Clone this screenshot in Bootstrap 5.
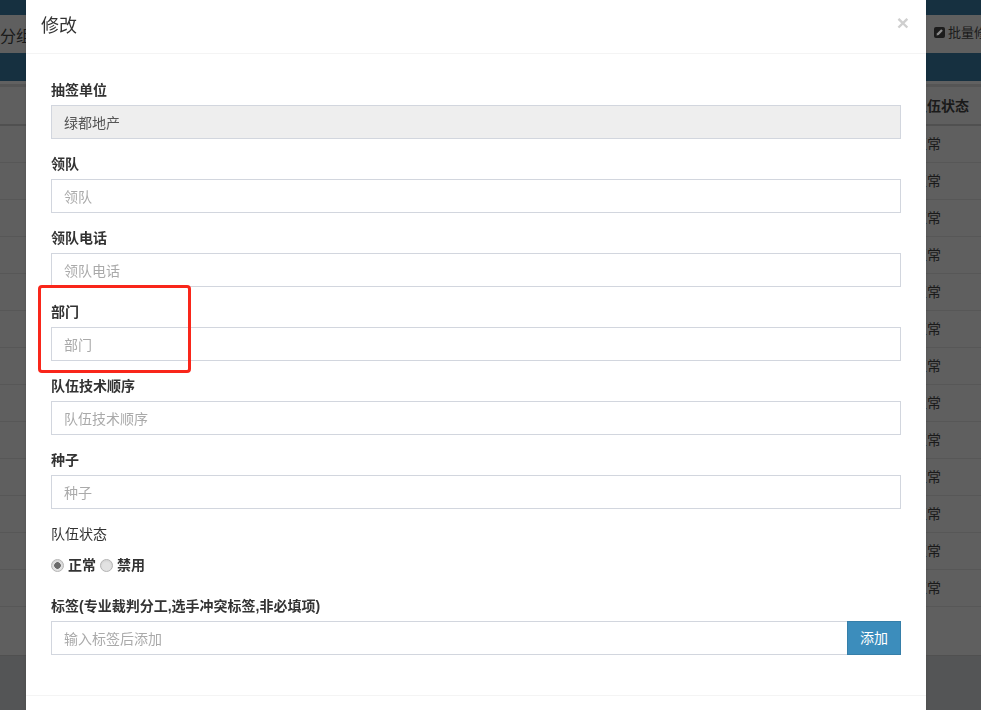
<!DOCTYPE html>
<html lang="zh-CN">
<head>
  <meta charset="UTF-8" />
  <meta name="viewport" content="width=device-width, initial-scale=1.0" />
  <title>修改</title>
  <link href="https://cdn.jsdelivr.net/npm/bootstrap@5.3.0/dist/css/bootstrap.min.css" rel="stylesheet">
  <style>
    html, body { height: 710px; overflow: hidden; }
    body {
      background: #545556;
      color: #1a1a1a;
      font-family: "Liberation Sans", "Noto Sans CJK SC", sans-serif;
      font-size: 14px;
      line-height: 20px;
    }
    .top-strip { height: 15px; background: #163040; }
    .tool-strip { height: 38px; background: #5f5f5f; white-space: nowrap; overflow: hidden; }
    .group-name { font-size: 16px; padding-top: 6px; }
    .batch-btn { font-size: 13px; width: 47px; margin-bottom: 3px; gap: 3px; }
    .edit-mark { width: 11px; height: 11px; flex: none; }
    .title-strip { height: 28px; background: #163040; }
    .gap-strip { height: 6px; background: #616161; border-bottom: 3px solid #555; }
    .team-panel { height: 569px; background: #5f5f5f; border-bottom: 1px solid #505050; }
    .team-table { margin: 0; --bs-table-bg: transparent; --bs-table-color: #1a1a1a; border-color: #575757; font-size: 14px; }
    .team-table th { padding: 9px 8px 8px; border-bottom: 2px solid #505050; white-space: nowrap; }
    .team-table .state-col { width: 76px; white-space: nowrap; }

    .modal .edit-dialog { max-width: 900px; margin: 0 0 0 26px; }
    .edit-dialog .modal-content { border: 0; border-radius: 0; box-shadow: 0 2px 3px rgba(0,0,0,.125); }
    .edit-dialog .modal-header { height: 54px; padding: 0 15px; border-bottom: 1px solid #f4f4f4; border-radius: 0; }
    .edit-dialog .modal-title { font-size: 18px; line-height: 25px; font-weight: 400; color: #333; }
    .close-x { font-size: 21px; font-weight: 700; color: #cfcfcf; line-height: 1; background: none; border: 0; padding: 0 0 8px; margin-right: 2px; font-family: "Liberation Sans", sans-serif; }
    .edit-dialog .modal-body { padding: 26px 25px 25px; color: #333; }
    .edit-dialog .modal-footer { height: 60px; border-top: 1px solid #f4f4f4; padding: 0; border-radius: 0; }
    .field-group { margin-bottom: 15px; position: relative; }
    .field-label { display: block; font-weight: 700; margin-bottom: 5px; color: #333; }
    .field-label.plain { font-weight: 400; }
    .edit-dialog .form-control {
      height: 34px; padding: 7px 12px 5px; border: 1px solid #d2d6de; border-radius: 0;
      font-size: 14px; line-height: 20px; color: #555; box-shadow: none;
    }
    .edit-dialog .form-control::placeholder { color: #aaa; }
    .edit-dialog .form-control:disabled { background: #eee; opacity: 1; padding: 6px 12px; }
    .radio-line { height: 32px; padding-top: 6px; font-weight: 700; gap: 4px; }
    .radio-line .form-check-input {
      width: 13px; height: 13px; margin: 0; flex: none; border: 1px solid #b4b4b4; background: #e2e2e2; box-shadow: inset 0 1px 2px rgba(0,0,0,.08);
    }
    .radio-line .form-check-input:checked {
      background: radial-gradient(circle, #6a6a6a 0 3px, #e2e2e2 3.6px);
      border-color: #b4b4b4;
    }
    .add-btn {
      width: 54px; padding: 6px 0; border-radius: 0; font-size: 14px; line-height: 20px;
      background: #3c8dbc; border: 1px solid #367fa9; color: #fff;
    }
    .red-frame {
      position: absolute; left: -13px; top: -17px; width: 153px; height: 88px;
      border: 3px solid #f9261a; border-radius: 4px; pointer-events: none;
    }
  </style>
</head>
<body>

<div class="top-strip"></div>
<div class="tool-strip d-flex justify-content-between align-items-center">
  <span class="group-name">分组</span>
  <span class="batch-btn d-flex align-items-center overflow-hidden">
    <svg class="edit-mark" viewBox="0 0 11 11"><rect width="11" height="11" rx="2" fill="#1c1c1c"/><path d="M2.5 8.5l.6-2.2L7.2 2.2l1.6 1.6-4.1 4.1z" fill="#8a8a8a"/></svg>
    批量修改
  </span>
</div>
<div class="title-strip"></div>
<div class="gap-strip"></div>
<div class="team-panel">
  <table class="table team-table">
    <thead><tr><th></th><th class="state-col">队伍状态</th></tr></thead>
    <tbody id="teamRows"></tbody>
  </table>
</div>

<div class="modal d-block">
  <div class="modal-dialog edit-dialog">
    <div class="modal-content">
      <div class="modal-header">
        <h4 class="modal-title">修改</h4>
        <button type="button" class="close-x ms-auto">×</button>
      </div>
      <div class="modal-body">
        <div class="field-group">
          <label class="field-label">抽签单位</label>
          <input type="text" class="form-control" value="绿都地产" disabled>
        </div>
        <div class="field-group">
          <label class="field-label">领队</label>
          <input type="text" class="form-control" placeholder="领队">
        </div>
        <div class="field-group">
          <label class="field-label">领队电话</label>
          <input type="text" class="form-control" placeholder="领队电话">
        </div>
        <div class="field-group">
          <label class="field-label">部门</label>
          <input type="text" class="form-control" placeholder="部门">
          <div class="red-frame"></div>
        </div>
        <div class="field-group">
          <label class="field-label">队伍技术顺序</label>
          <input type="text" class="form-control" placeholder="队伍技术顺序">
        </div>
        <div class="field-group">
          <label class="field-label">种子</label>
          <input type="text" class="form-control" placeholder="种子">
        </div>
        <div class="field-group">
          <label class="field-label plain">队伍状态</label>
          <div class="radio-line d-flex align-items-start">
            <input class="form-check-input mt-1" type="radio" name="state" checked>
            <span>正常</span>
            <input class="form-check-input mt-1" type="radio" name="state">
            <span>禁用</span>
          </div>
        </div>
        <div class="field-group">
          <label class="field-label">标签(专业裁判分工,选手冲突标签,非必填项)</label>
          <div class="input-group">
            <input type="text" class="form-control" placeholder="输入标签后添加">
            <button type="button" class="btn add-btn">添加</button>
          </div>
        </div>
      </div>
      <div class="modal-footer"></div>
    </div>
  </div>
</div>

<script src="https://cdn.jsdelivr.net/npm/bootstrap@5.3.0/dist/js/bootstrap.bundle.min.js"></script>
<script>
  const teamRows = document.getElementById("teamRows")
  for (let i = 0; i < 13; i++) {
    teamRows.innerHTML += '<tr><td></td><td class="state-col">正常</td></tr>'
  }
</script>
</body>
</html>
